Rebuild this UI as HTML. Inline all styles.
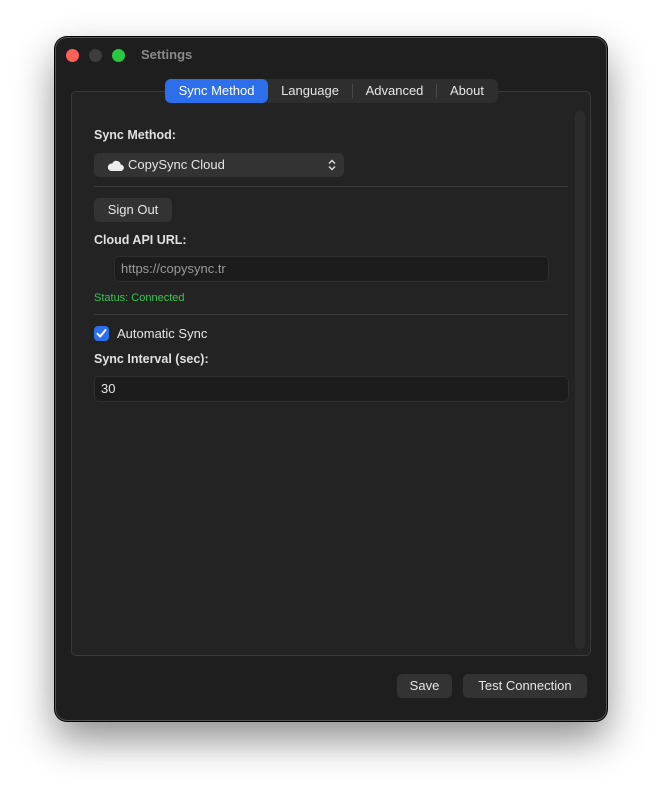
<!DOCTYPE html>
<html><head><meta charset="utf-8"><style>
*{box-sizing:border-box;margin:0;padding:0}
body{width:662px;height:794px;background:#fff;font-family:"Liberation Sans",sans-serif;position:relative;overflow:hidden}
.win{position:absolute;left:55px;top:37px;width:552px;height:684px;background:#1e1e1e;border-radius:12px;border:1px solid #555;box-shadow:0 0 0 1px #000,0 18px 40px rgba(0,0,0,.45)}
.dot{position:absolute;top:11px;width:13px;height:13px;border-radius:50%}
.title{position:absolute;left:85px;top:9px;color:#8a8a8a;font-weight:bold;font-size:13px}
.box{position:absolute;left:15px;top:53px;width:520px;height:565px;background:#232323;border:1px solid #3a3a3a;border-radius:5px}
.tabs{position:absolute;left:109px;top:41px;height:24px;width:333px;background:#2e2e2e;border-radius:6px;display:flex;font-size:13px;color:#e6e6e6;align-items:center}
.tab{height:24px;line-height:24px;text-align:center;position:relative}
.tab.sel{background:#2d6fea;color:#fff;border-radius:6px}
.sep{width:1px;height:14px;background:#4a4a4a}
.lbl{position:absolute;color:#e0e0e0;font-weight:bold;font-size:12.5px}
.ctl{position:absolute;background:#333;border-radius:5px;color:#e6e6e6;font-size:13px}
.hr{position:absolute;left:38px;width:474px;height:1px;background:#3a3a3a}
.field{position:absolute;background:#1c1c1c;border:1px solid #2e2e2e;border-radius:5px;font-size:13px}
</style></head><body>
<div class="win">
 <div class="dot" style="left:10px;background:#fe5f57"></div>
 <div class="dot" style="left:33px;background:#3d3d3d"></div>
 <div class="dot" style="left:56px;background:#28c840"></div>
 <div class="title">Settings</div>
 <div class="box"></div>
 <div style="position:absolute;left:519px;top:73px;width:10px;height:538px;background:#2c2c2c;border-radius:5px"></div>
 <div class="tabs"><div class="tab sel" style="width:103px">Sync Method</div><div class="tab" style="width:84px">Language</div><div class="sep"></div><div class="tab" style="width:83px">Advanced</div><div class="sep"></div><div class="tab" style="width:60px">About</div></div>
 <div class="lbl" style="left:38px;top:90px">Sync Method:</div>
 <div class="ctl" style="left:38px;top:115px;width:250px;height:24px;line-height:24px;padding-left:34px">CopySync Cloud
  <svg style="position:absolute;left:13px;top:7px" width="17" height="11" viewBox="0 0 17 11"><path d="M4 11H13.5A3.2 3.2 0 0 0 13.8 4.6 4.5 4.5 0 0 0 5.2 3.6 3.7 3.7 0 0 0 4 11Z" fill="#eee"/></svg>
  <svg style="position:absolute;right:8px;top:6px" width="8" height="12" viewBox="0 0 8 12"><path d="M1 4.5 4 1.5 7 4.5M1 7.5 4 10.5 7 7.5" fill="none" stroke="#ddd" stroke-width="1.4"/></svg></div>
 <div class="hr" style="top:148px"></div>
 <div class="ctl" style="left:38px;top:160px;width:78px;height:24px;line-height:24px;text-align:center">Sign Out</div>
 <div class="lbl" style="left:38px;top:195px">Cloud API URL:</div>
 <div class="field" style="left:58px;top:218px;width:435px;height:26px;line-height:24px;padding-left:6px;color:#9a9a9a">https://copysync.tr</div>
 <div style="position:absolute;left:38px;top:254px;color:#3cc44f;font-size:11px">Status: Connected</div>
 <div class="hr" style="top:276px"></div>
 <div style="position:absolute;left:38px;top:288px;width:15px;height:15px;background:#2d6fea;border-radius:4px"><svg width="15" height="15" viewBox="0 0 15 15"><path d="M3.5 7.8 6.2 10.5 11.5 4" fill="none" stroke="#fff" stroke-width="2" stroke-linecap="round" stroke-linejoin="round"/></svg></div>
 <div style="position:absolute;left:61px;top:288px;color:#e6e6e6;font-size:13px">Automatic Sync</div>
 <div class="lbl" style="left:38px;top:314px">Sync Interval (sec):</div>
 <div class="field" style="left:38px;top:338px;width:475px;height:26px;line-height:24px;padding-left:6px;color:#e6e6e6">30</div>
 <div class="ctl" style="left:341px;top:636px;width:55px;height:24px;line-height:24px;text-align:center">Save</div>
 <div class="ctl" style="left:407px;top:636px;width:124px;height:24px;line-height:24px;text-align:center">Test Connection</div>
</div>
</body></html>
